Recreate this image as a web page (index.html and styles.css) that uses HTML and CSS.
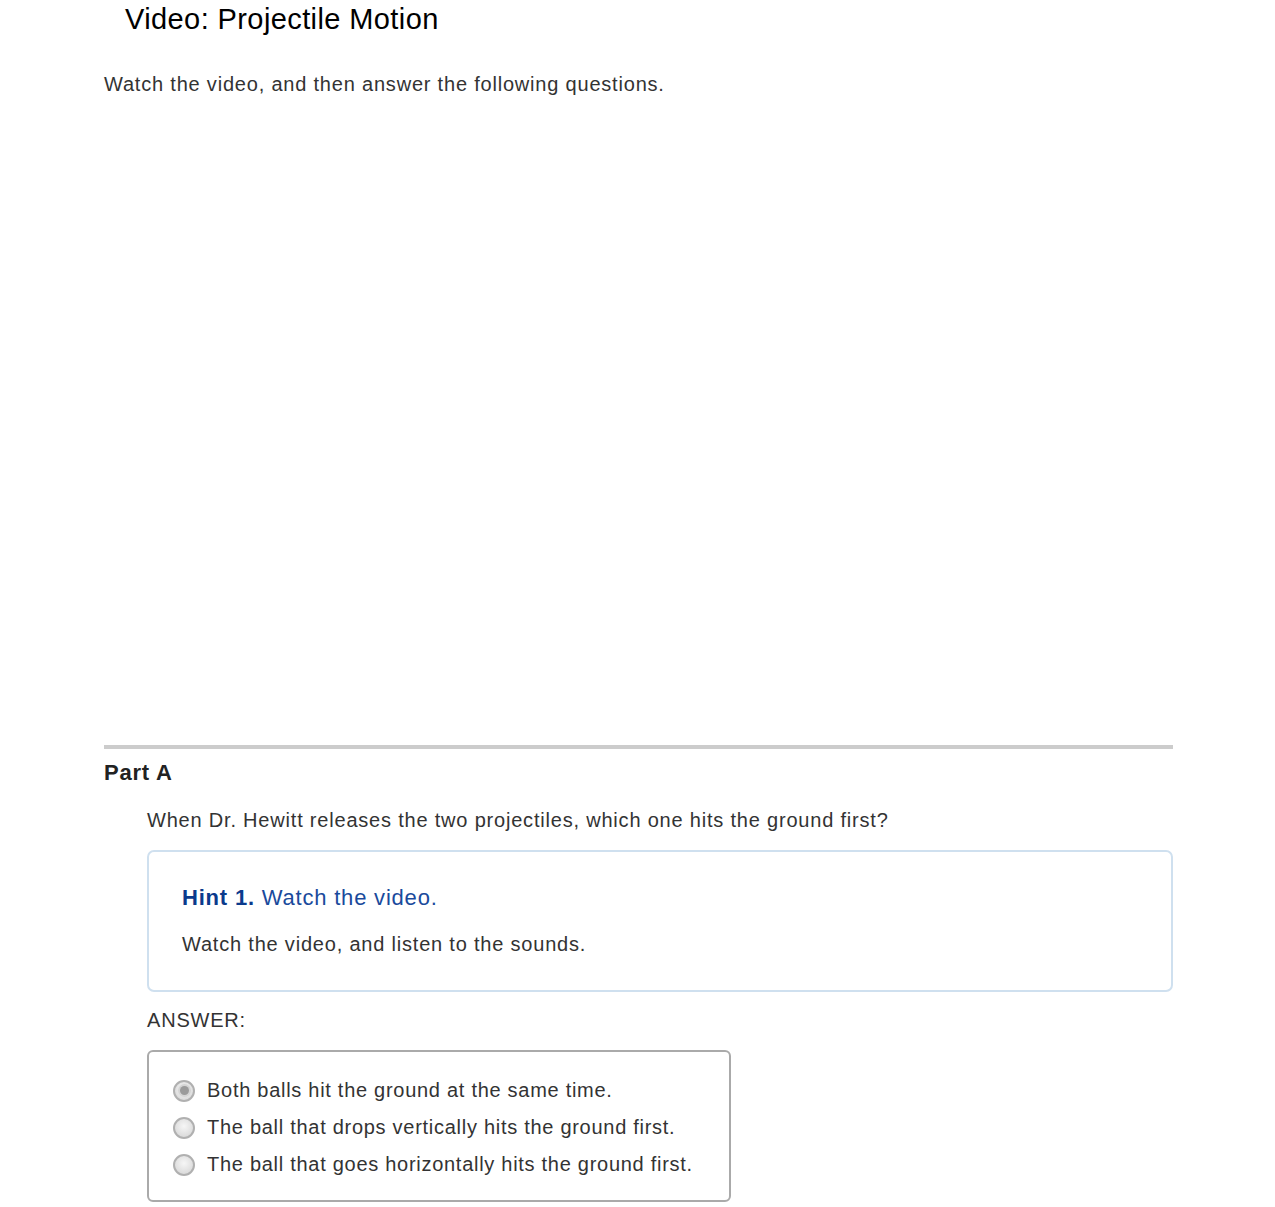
FILE: index.html
```html
<!DOCTYPE html>
<html lang="en">

<head>
    <meta charset="UTF-8">
    <meta name="viewport" content="width=device-width, initial-scale=1.0">
    <title>Video: Projectile Motion</title>
    <link rel="stylesheet" href="styles.css">
</head>

<body>

    <div class="page">
        <h1 class="title">Video: Projectile Motion</h1>
        <p class="intro">Watch the video, and then answer the following questions.</p>

        <div class="video-space"></div>

        <div class="part">
            <h2 class="part-title">Part A</h2>
            <div class="part-body">
                <p class="question">When Dr. Hewitt releases the two projectiles, which one hits the ground first?</p>

                <div class="hint">
                    <p class="hint-title"><strong>Hint 1.</strong> Watch the video.</p>
                    <p class="hint-text">Watch the video, and listen to the sounds.</p>
                </div>

                <p class="answer-label">ANSWER:</p>

                <div class="answer-box">
                    <label class="choice"><span class="radio checked"></span>Both balls hit the ground at the same time.</label>
                    <label class="choice"><span class="radio"></span>The ball that drops vertically hits the ground first.</label>
                    <label class="choice"><span class="radio"></span>The ball that goes horizontally hits the ground first.</label>
                </div>
            </div>
        </div>
    </div>

</body>

</html>
```

FILE: styles.css
```css
*,
*::before,
*::after {
    box-sizing: border-box;
}

body {
    margin: 0;
    padding: 0;
    background: #ffffff;
    font-family: "Liberation Sans", Arial, sans-serif;
    color: #333333;
    letter-spacing: 0.8px;
}

.page {
    width: 1069px;
    margin-left: 104px;
}

.title {
    margin: 0;
    padding: 0 0 0 21px;
    font-size: 29px;
    font-weight: normal;
    line-height: 38px;
    letter-spacing: 0.4px;
    color: #000000;
}

.intro {
    margin: 34px 0 0 0;
    font-size: 20px;
    line-height: 24px;
}

.video-space {
    height: 649px;
}

.part {
    border-top: 4px solid #cccccc;
}

.part-title {
    margin: 10px 0 0 0;
    font-size: 22px;
    line-height: 28px;
    font-weight: bold;
    color: #222222;
}

.part-body {
    padding-left: 43px;
}

.question {
    margin: 21px 0 0 0;
    font-size: 20px;
    line-height: 24px;
}

.hint {
    margin-top: 18px;
    border: 2px solid #cfe0ef;
    border-radius: 7px;
    padding: 33px 33px 34px;
}

.hint-title {
    margin: 0;
    font-size: 22px;
    line-height: 26px;
    color: #1a4a9c;
}

.hint-title strong {
    color: #0b3a8c;
}

.hint-text {
    margin: 21px 0 0 0;
    font-size: 20px;
    line-height: 24px;
}

.answer-label {
    margin: 16px 0 0 0;
    font-size: 20px;
    line-height: 24px;
}

.answer-box {
    width: 584px;
    margin-top: 18px;
    border: 2px solid #aaaaaa;
    border-radius: 6px;
    padding: 20px 24px 17px;
}

.choice {
    display: flex;
    align-items: center;
    gap: 12px;
    font-size: 20px;
    line-height: 37px;
    letter-spacing: 0.72px;
}

.radio {
    width: 22px;
    height: 22px;
    border-radius: 50%;
    border: 2px solid #b0b0b0;
    background: radial-gradient(circle at 50% 40%, #f6f6f6, #d2d2d2);
    display: flex;
    align-items: center;
    justify-content: center;
}

.radio.checked::after {
    content: "";
    width: 9px;
    height: 9px;
    border-radius: 50%;
    background: #9a9a9a;
    box-shadow: 0 0 0 2px #d4d4d4;
}
```
